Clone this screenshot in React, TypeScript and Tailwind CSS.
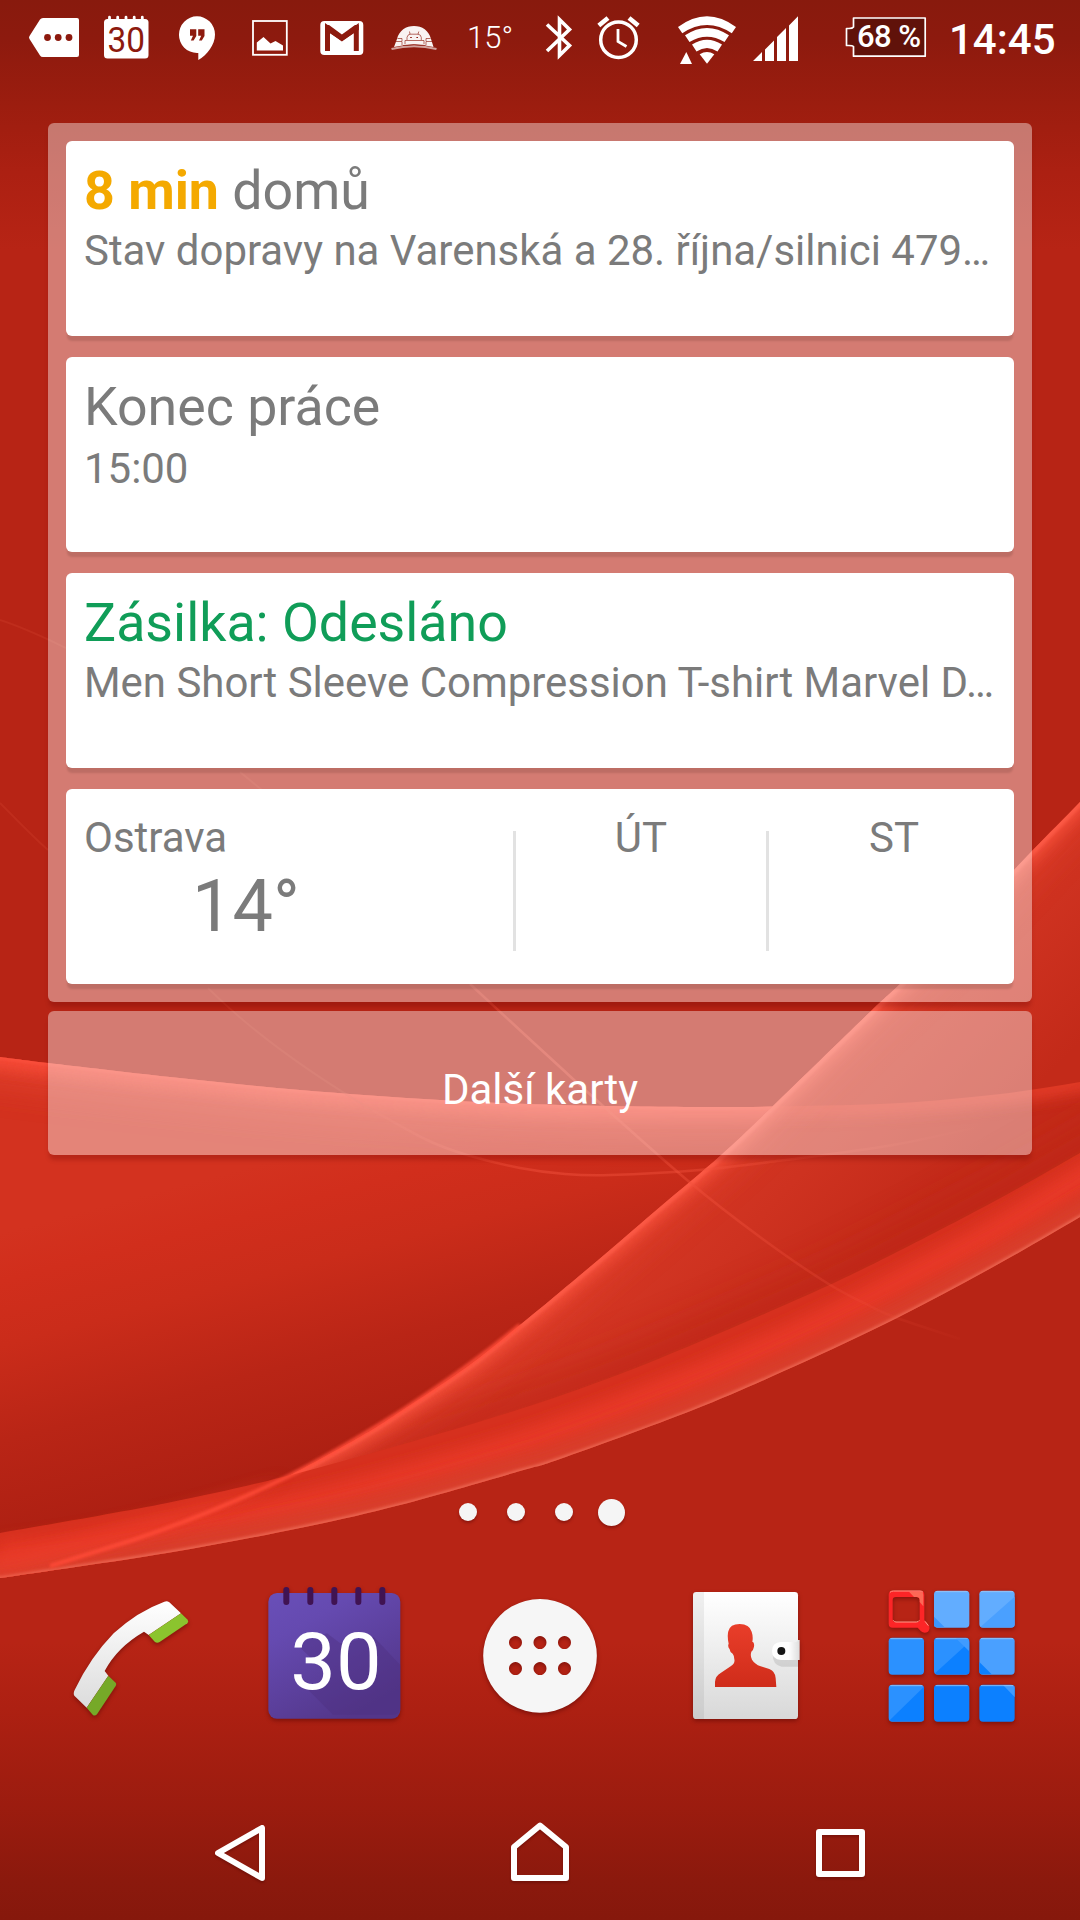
import { memo } from "react";
import type { ReactNode } from "react";

type Point = [number, number];

// Catmull-Rom spline through the points
const smooth = (points: Point[]) => {
  let d = `${points[0][0]} ${points[0][1]}`;
  for (let i = 0; i < points.length - 1; i++) {
    const a = points[i - 1] ?? points[i];
    const b = points[i];
    const c = points[i + 1];
    const e = points[i + 2] ?? c;
    d += `C${b[0] + (c[0] - a[0]) / 6} ${b[1] + (c[1] - a[1]) / 6} ${c[0] - (e[0] - b[0]) / 6} ${c[1] - (e[1] - b[1]) / 6} ${c[0]} ${c[1]}`;
  }
  return d;
};

const ridge = smooth([[-60, 1049], [0, 1057], [48, 1063], [170, 1077], [300, 1090], [440, 1100], [560, 1105], [700, 1107], [800, 1106], [900, 1103], [1000, 1094], [1080, 1082], [1140, 1071]]);
const diagonal = smooth([[1140, 738], [1080, 802], [1032, 851], [970, 916], [900, 984], [870, 1012], [773, 1106], [720, 1156], [660, 1207], [610, 1250], [560, 1292], [520, 1325], [467, 1367], [400, 1412], [360, 1437], [287, 1477], [233, 1502], [133, 1540], [50, 1566], [0, 1577], [-60, 1588]]);
const bandTop = smooth([[-60, 1543], [0, 1533], [167, 1503], [283, 1477], [400, 1445], [520, 1409], [620, 1374], [727, 1330], [827, 1286], [893, 1254], [993, 1202], [1080, 1153], [1140, 1118]]);
const bandMiddle = smooth([[-60, 1577], [0, 1569], [167, 1534], [300, 1505], [400, 1479], [520, 1444], [620, 1408], [727, 1365], [827, 1320], [893, 1286], [993, 1233], [1080, 1180], [1140, 1142]]);
const bandBottom = smooth([[1140, 1180], [1080, 1217], [993, 1267], [897, 1318], [793, 1367], [693, 1410], [560, 1459], [520, 1471], [400, 1505], [300, 1528], [167, 1553], [0, 1578], [-60, 1586]]);
const threadOne = smooth([[470, 984], [510, 1021], [560, 1067], [593, 1097], [687, 1180], [760, 1237], [827, 1283], [870, 1306], [897, 1318], [960, 1339]]);
const threadTwo = smooth([[372, 1110], [427, 1140], [467, 1155], [520, 1168], [565, 1174], [610, 1175], [700, 1170], [777, 1161], [893, 1145], [1000, 1122]]);

const Wallpaper = () => (
  <svg className="absolute inset-0" width="1080" height="1920" viewBox="0 0 1080 1920">
    <defs>
      <linearGradient id="shade" x1="0" y1="0" x2="0" y2="1">
        <stop offset="0" stopColor="#881a0d" />
        <stop offset="0.02" stopColor="#8d1a0e" />
        <stop offset="0.055" stopColor="#9c1d0f" />
        <stop offset="0.09" stopColor="#ac2012" />
        <stop offset="0.13" stopColor="#b72415" />
        <stop offset="0.855" stopColor="#b72415" />
        <stop offset="0.89" stopColor="#ad2012" />
        <stop offset="0.94" stopColor="#9c1c0f" />
        <stop offset="0.98" stopColor="#8b190d" />
        <stop offset="1" stopColor="#86180c" />
      </linearGradient>
      <linearGradient id="left" gradientUnits="userSpaceOnUse" x1="200" y1="1180" x2="280" y2="1480">
        <stop offset="0" stopColor="#d3321f" />
        <stop offset="0.15" stopColor="#d12e1c" />
        <stop offset="0.35" stopColor="#ca2c1a" />
        <stop offset="0.65" stopColor="#b92516" />
        <stop offset="1" stopColor="#ac1f12" />
      </linearGradient>
      <linearGradient id="sheet" gradientUnits="userSpaceOnUse" x1="700" y1="1170" x2="840" y2="1300">
        <stop offset="0" stopColor="#d43724" />
        <stop offset="0.4" stopColor="#ce3220" />
        <stop offset="1" stopColor="#c32a19" />
      </linearGradient>
      <linearGradient id="fade" gradientUnits="userSpaceOnUse" x1="360" y1="0" x2="980" y2="0">
        <stop offset="0" stopColor="#f0503b" stopOpacity="0.1" />
        <stop offset="0.3" stopColor="#f0503b" stopOpacity="0.5" />
        <stop offset="0.6" stopColor="#f0503b" stopOpacity="0.4" />
        <stop offset="1" stopColor="#f0503b" stopOpacity="0" />
      </linearGradient>
      <filter id="wide" filterUnits="userSpaceOnUse" x="-100" y="600" width="1300" height="1100">
        <feGaussianBlur stdDeviation="16" />
      </filter>
      <filter id="soft" filterUnits="userSpaceOnUse" x="-100" y="600" width="1300" height="1100">
        <feGaussianBlur stdDeviation="7" />
      </filter>
      <filter id="fine" filterUnits="userSpaceOnUse" x="-100" y="600" width="1300" height="1100">
        <feGaussianBlur stdDeviation="1.500" />
      </filter>
      <clipPath id="belowRidge">
        <path d={`M${ridge}V1700H-60Z`} />
      </clipPath>
      <clipPath id="belowDiagonal">
        <path d={`M${diagonal}V1700H1140Z`} />
      </clipPath>
      <clipPath id="aboveEdge">
        <path d={`M${bandBottom}V500H1140Z`} />
      </clipPath>
      <clipPath id="insideBand">
        <path d={`M${bandTop}V1700H-60Z`} />
      </clipPath>
    </defs>
    <rect width="1080" height="1920" fill="url(#shade)" />
    <g clipPath="url(#aboveEdge)" fill="none">
      <g clipPath="url(#belowRidge)">
        <rect y="1000" width="1080" height="600" fill="url(#left)" />
        <path d={`M${ridge}`} stroke="#e54431" strokeWidth="50" filter="url(#wide)" opacity="0.75" />
        <path d={`M${ridge}`} stroke="#f94c38" strokeWidth="22" filter="url(#soft)" opacity="0.85" />
        <path d={`M${ridge}`} stroke="#ff5743" strokeWidth="5" filter="url(#fine)" opacity="0.5" />
      </g>
      <g clipPath="url(#belowDiagonal)">
        <rect y="720" width="1080" height="880" fill="url(#sheet)" />
        <g clipPath="url(#belowRidge)">
          <path d={`M${ridge}`} stroke="#e63d29" strokeWidth="22" filter="url(#soft)" opacity="0.85" />
        </g>
        <path d={`M${bandTop}`} stroke="#bd2516" strokeWidth="50" filter="url(#wide)" opacity="0.6" />
        <path d={`M${diagonal}`} stroke="#e5432f" strokeWidth="32" filter="url(#wide)" opacity="0.7" />
        <path d={`M${diagonal}`} stroke="#fb5440" strokeWidth="16" filter="url(#soft)" opacity="0.8" />
        <path d={`M${diagonal}`} stroke="#ff5d49" strokeWidth="8" filter="url(#fine)" opacity="0.75" />
      </g>
      <g clipPath="url(#insideBand)">
        <rect y="1100" width="1080" height="500" fill="#d6301e" />
        <path d={`M${bandMiddle}`} stroke="#e73926" strokeWidth="26" filter="url(#soft)" />
        <path d={`M${bandBottom}`} stroke="#d93d2a" strokeWidth="34" filter="url(#soft)" />
        <path d={`M${bandBottom}`} stroke="#ec6a56" strokeWidth="4" filter="url(#fine)" opacity="0.9" />
      </g>
      <path d="M-10 1570L0 1540C110 1530 200 1502 287 1477C210 1515 110 1552 0 1577Z" fill="#f03d2a" filter="url(#soft)" opacity="0.5" />
      <path d="M520 1325C485 1354 440 1386 400 1412C360 1437 325 1458 287 1477C235 1502 190 1521 133 1540L50 1566" stroke="#ff4b38" strokeWidth="4" filter="url(#fine)" opacity="0.9" />
    </g>
    <g fill="none" stroke="url(#fade)" strokeWidth="2.500">
      <path d={`M${threadOne}`} />
      <path d={`M${threadTwo}`} />
    </g>
    <path d="M0 620C25 628 45 638 66 648M240 772L262 790M0 803C15 818 30 834 48 850M208 988C260 1040 330 1085 372 1110" fill="none" stroke="#d84632" strokeWidth="2" opacity="0.25" />
  </svg>
);

const StatusIcon = ({ x, w, children }: { x: number; w: number; children: ReactNode }) => (
  <svg width={w} height={75} viewBox={`${x} 0 ${w} 75`} className="shrink-0" fill="white">
    {children}
  </svg>
);

const StatusBar = () => (
  <header className="flex h-[75px] pl-5 text-white">
    <StatusIcon x={20} w={72}>
      <path d="M29.500 36Q28.500 37.500 29.500 39L40 55.500Q41 57 43 57H77Q79 57 79 55V20Q79 18 77 18H43Q41 18 40 19.500Z" />
      <g fill="#8d1a0e">
        <circle cx="47.500" cy="37.500" r="3.400" />
        <circle cx="58.200" cy="37.500" r="3.400" />
        <circle cx="69" cy="37.500" r="3.400" />
      </g>
    </StatusIcon>
    <StatusIcon x={92} w={68}>
      <rect x="104" y="19" width="44.500" height="39.500" rx="3.500" />
      <path d="M109.500 17.200V22M117.700 17.200V22M126 17.200V22M134.200 17.200V22M142.300 17.200V22" stroke="white" strokeWidth="2.800" strokeLinecap="round" />
      <text x="107.500" y="51.800" fontSize="34.500" textLength="37.500" lengthAdjust="spacingAndGlyphs" className="font-[Roboto,sans-serif]" fill="#8d1a0e">30</text>
    </StatusIcon>
    <StatusIcon x={160} w={72}>
      <path d="M197 16.300A18 18.300 0 0 1 215 34.500C215 45 207 55 198.300 60V53H197A18 18.300 0 0 1 197 16.300Z" />
      <path d="M190 29.300H196.300V36L193.600 40.500H190.800L193 35.800H190ZM198.200 29.300H204.500V36L201.800 40.500H199L201.200 35.800H198.200Z" fill="#8d1a0e" />
    </StatusIcon>
    <StatusIcon x={232} w={72}>
      <rect x="253" y="21" width="33.800" height="33.800" fill="none" stroke="white" strokeWidth="1.800" />
      <path d="M256.800 50.500V42.500L263.500 37L270.500 43.500L275.500 41L283 45.500V50.500Z" />
    </StatusIcon>
    <StatusIcon x={304} w={74}>
      <rect x="320.300" y="21" width="43" height="34" rx="4" />
      <path d="M327.500 51V28L341.900 38.500L356.300 28V51" stroke="#8d1a0e" strokeWidth="5" fill="none" />
      <path d="M325 25H329L341.900 34.500L355 25H358.800V30L341.900 41L325 30Z" fill="#8d1a0e" />
    </StatusIcon>
    <StatusIcon x={378} w={70}>
      <path d="M397 39C399 30.500 406 26 414 26S429 30.500 431 39L433.500 47Q414 42 394 47Z" opacity="0.95" />
      <path d="M391.500 49Q414 43.500 436.500 49" stroke="white" strokeWidth="2.200" fill="none" opacity="0.6" />
      <g fill="none" stroke="#8d1a0e" strokeWidth="0.800" opacity="0.8">
        <path d="M407 40V37.500Q407.500 34.500 410 34.200L409.500 31.500M410 34.200H418L418.800 31.500M418 34.200Q421 34.500 421.300 37.500V40M405 44V40.500H424V44M403 45.500Q414 43.500 425.500 45.500M397.500 38.500H402V41M430.500 38.500H426V41M396 41.500H402V45M426 45V41.500H432.500" />
      </g>
      <path d="M410.200 37.500H411.800M416.400 37.500H418" stroke="#8d1a0e" />
    </StatusIcon>
    <div className="w-[78px] shrink-0 pl-[19px] pt-[19px] text-[31px] font-light leading-[38px]">15°</div>
    <StatusIcon x={526} w={62}>
      <path d="M547 24.500L569.500 45.500L559.500 55.500V19.500L569.500 29.500L547 51" fill="none" stroke="white" strokeWidth="3.600" />
    </StatusIcon>
    <StatusIcon x={588} w={60}>
      <g fill="none" stroke="white">
        <circle cx="618.500" cy="39.700" r="17.800" strokeWidth="3.500" />
        <path d="M618 29V41.500L626.500 46.500" strokeWidth="2.800" />
        <path d="M598.800 25.500L608 18M638.200 25.500L629 18" strokeWidth="4.600" />
      </g>
    </StatusIcon>
    <StatusIcon x={648} w={96}>
      <path d="M678 27Q707 5.500 736 27L731.800 33.300Q707 16.800 682.300 33.300Z" />
      <path d="M685 35.300Q707 20.500 729 35.300L724.500 42Q707 31.500 689.500 42Z" />
      <path d="M692 44.500Q707 35 722 44.500L717.500 51.500Q707 44.500 696.500 51.500Z" />
      <path d="M699.700 54.300Q707 49.500 714.300 54.300L707 63.700Z" />
      <path d="M686.300 52L692 64H680Z" />
    </StatusIcon>
    <StatusIcon x={744} w={78}>
      <path d="M753 61L762 52V61ZM765 61V49.500L774 40.500V61ZM777 61V37L786 28V61ZM789 61V25.500L798 16.300V61Z" />
    </StatusIcon>
    <div className="relative h-[75px] w-[114px] shrink-0">
      <StatusIcon x={822} w={114}>
        <path d="M853.500 18H925.200V56.200H853.500V46.500Q852.500 45.500 849 45.500H846.500V28.500H849Q852.500 28.500 853.500 27Z" fill="#60120a" stroke="white" strokeWidth="1.700" strokeLinejoin="round" />
      </StatusIcon>
      <span className="absolute left-[35px] top-[18px] whitespace-nowrap text-[31px] font-medium leading-[37px] tracking-[-0.6px]">68 %</span>
    </div>
    <time className="pl-[13px] pt-[15px] text-[42px] font-medium leading-[50px]">14:45</time>
  </header>
);

const Card = ({ title, text }: { title: ReactNode; text: ReactNode }) => (
  <article className="h-[195px] rounded-md bg-white px-[18px] pt-[18px] shadow-[0_6px_2px_-1px_rgba(70,40,30,0.16)]">
    <h2 className="text-[53.7px] leading-[64px]">{title}</h2>
    <p className="whitespace-nowrap pt-px text-[41.95px] leading-[54px]">{text}</p>
  </article>
);

const WeatherCard = () => (
  <article className="flex h-[195px] rounded-md bg-white text-[42px] leading-[54px] shadow-[0_6px_2px_-1px_rgba(70,40,30,0.16)]">
    <div className="w-[447px] shrink-0 pl-[18px] pt-[22px]">
      <p>Ostrava</p>
      <p className="pl-[108px] pt-[2px] text-[72px] leading-[80px]">14°</p>
    </div>
    <div className="mt-[42px] h-[120px] w-[3px] shrink-0 bg-[#e2e2e2]" />
    <p className="w-[250px] shrink-0 pt-[22px] text-center">ÚT</p>
    <div className="mt-[42px] h-[120px] w-[3px] shrink-0 bg-[#e2e2e2]" />
    <p className="flex-1 pl-[5px] pt-[22px] text-center">ST</p>
  </article>
);

const PageDots = () => (
  <div className="mt-[343px] flex h-[28px] items-center justify-center gap-[30px] pl-[3px]">
    <i className="size-[18px] rounded-full bg-[#f5f5f5] shadow-[0_2px_3px_rgba(80,0,0,0.4)]" />
    <i className="size-[18px] rounded-full bg-[#f5f5f5] shadow-[0_2px_3px_rgba(80,0,0,0.4)]" />
    <i className="size-[18px] rounded-full bg-[#f5f5f5] shadow-[0_2px_3px_rgba(80,0,0,0.4)]" />
    <i className="-ml-[5px] size-[27px] rounded-full bg-[#f5f5f5] shadow-[0_2px_3px_rgba(80,0,0,0.4)]" />
  </div>
);

const DockIcon = ({ viewBox, children }: { viewBox: string; children: ReactNode }) => (
  <svg className="mx-auto drop-shadow-[0_2px_2px_rgba(70,0,0,0.45)]" width="180" height="180" viewBox={viewBox}>
    {children}
  </svg>
);

const tiles = [
  { x: 223, y: 62, fill: "#62adff", corner: "M223 140L255 172H230Q223 172 223 165Z", tint: "#3b96ff" },
  { x: 359, y: 62, fill: "#62adff", corner: "M465 80V165Q465 172 458 172H366L363 170Z", tint: "#4aa0ff" },
  { x: 87, y: 203, fill: "#2b91ff", corner: "", tint: "" },
  { x: 223, y: 203, fill: "#2b91ff", corner: "M329 216V305Q329 313 321 313H231L226 310Z", tint: "#0c80ff" },
  { x: 359, y: 203, fill: "#4aa0ff", corner: "M359 276L396 313H367Q359 313 359 305Z", tint: "#0c80ff" },
  { x: 87, y: 344, fill: "#2b91ff", corner: "M193 350V446Q193 454 185 454H95L90 451Z", tint: "#0c80ff" },
  { x: 223, y: 344, fill: "#0c80ff", corner: "", tint: "" },
  { x: 359, y: 344, fill: "#0c80ff", corner: "M430 345H457Q465 345 465 353V381Z", tint: "#409bff" },
];

const Dock = () => (
  <nav className="mt-[44px] grid h-[180px] grid-cols-5 px-[27px]">
    <DockIcon viewBox="-1 0 540 540">
      <defs>
        <linearGradient id="handset" x1="0" y1="0" x2="0" y2="1">
          <stop offset="0" stopColor="#ffffff" />
          <stop offset="1" stopColor="#dcdcdc" />
        </linearGradient>
      </defs>
      <path d="M102 377Q98 370 103 360Q150 262 220 190Q290 125 372 95Q380 91 387 97L422 130L325 195L311 185Q230 232 193 303L204 317L139 413Z" fill="url(#handset)" />
      <path d="M422 130L442 149Q446 155 441 160L358 216Q350 221 343 215L325 195Z" fill="#8bc42e" />
      <path d="M204 317L226 338Q229 343 226 348L170 433Q163 440 157 434L139 413Z" fill="#76a928" />
    </DockIcon>
    <DockIcon viewBox="614 0 540 540">
      <defs>
        <linearGradient id="calendar" x1="0" y1="0" x2="0.6" y2="1">
          <stop offset="0" stopColor="#694fb8" />
          <stop offset="0.3" stopColor="#654ab0" />
          <stop offset="1" stopColor="#53368a" />
        </linearGradient>
      </defs>
      <rect x="684" y="69" width="396" height="377" rx="26" fill="url(#calendar)" />
      <path d="M766 220L870 320L800 356L878 434H1056Q1080 434 1080 410V285L1000 200L900 220L860 190Z" fill="#4d2f80" opacity="0.4" />
      <g fill="#401352">
        <rect x="729" y="51" width="18" height="54" rx="9" />
        <rect x="801" y="51" width="18" height="54" rx="9" />
        <rect x="873" y="51" width="18" height="54" rx="9" />
        <rect x="945" y="51" width="18" height="54" rx="9" />
        <rect x="1017" y="51" width="18" height="54" rx="9" />
      </g>
      <text x="750" y="356" fontSize="240" textLength="274" lengthAdjust="spacingAndGlyphs" className="font-[Roboto,sans-serif]" fill="white">30</text>
    </DockIcon>
    <DockIcon viewBox="-30 0 540 540">
      <path fillRule="evenodd" d="M240 87a170.500 170.500 0 1 0 .1 0ZM166.500 198a19.500 19.500 0 1 1-.1 0ZM240 198a19.500 19.500 0 1 1-.1 0ZM313.500 198a19.500 19.500 0 1 1-.1 0ZM166.500 276a19.500 19.500 0 1 1-.1 0ZM240 276a19.500 19.500 0 1 1-.1 0ZM313.500 276a19.500 19.500 0 1 1-.1 0Z" fill="#f6f6f6" />
    </DockIcon>
    <DockIcon viewBox="585 0 540 540">
      <defs>
        <linearGradient id="cover" x1="0" y1="0" x2="0" y2="1">
          <stop offset="0" stopColor="#ffffff" />
          <stop offset="0.25" stopColor="#f6f6f6" />
          <stop offset="1" stopColor="#d8d8d8" />
        </linearGradient>
        <linearGradient id="person" x1="0" y1="0" x2="0" y2="1">
          <stop offset="0" stopColor="#e93e2a" />
          <stop offset="1" stopColor="#cf2c1a" />
        </linearGradient>
        <linearGradient id="clasp" x1="0" y1="0" x2="1" y2="0">
          <stop offset="0.6" stopColor="#ffffff" />
          <stop offset="1" stopColor="#dddddd" />
        </linearGradient>
      </defs>
      <rect x="699" y="66" width="315" height="381" rx="10" fill="url(#cover)" />
      <path d="M709 66H732V447H709Q699 447 699 437V76Q699 66 709 66Z" fill="#000" opacity="0.06" />
      <path d="M765 351V336Q766 318 782 309L812 289Q826 280 823 268Q823 257 818 251Q810 248 809 238Q802 230 806 221Q801 198 805 184Q810 162 839 162Q868 162 875 185Q880 200 877 215Q884 217 882 230Q880 241 874 245Q870 258 876 269Q884 282 902 289L928 297Q946 304 947 325L949 351Z" fill="url(#person)" />
      <path d="M1014 220V290H965Q938 285 938 255Z" fill="#000" opacity="0.1" />
      <path d="M1019 210V270H963Q936 268 936 243Q936 217 963 216H1006Q1013 216 1014 210Z" fill="url(#clasp)" />
      <circle cx="964" cy="243" r="12" fill="#161616" />
    </DockIcon>
    <DockIcon viewBox="1 0 540 540">
      <path fillRule="evenodd" d="M99 62H182Q194 62 194 74V150L207 165Q213 176 205 185Q194 192 184 184L174 173H99Q87 173 87 161V74Q87 62 99 62ZM109 81Q99 81 99 91V146Q99 156 109 156H170Q180 156 180 146V91Q180 81 170 81Z" fill="#fc2527" />
      <path d="M148 65H182Q191 65 191 76V109L180 96V91Q180 81 170 81H163Z" fill="#fc6856" />
      <path d="M91 67Q95 63 101 63H181Q187 63 190 67M101 151Q104 156 109 156H170Q176 156 179 151M196 154L206 167" fill="none" stroke="#ff9b8a" strokeWidth="3" />
      {tiles.map((tile) => (
        <g key={`${tile.x}-${tile.y}`}>
          <rect x={tile.x} y={tile.y} width="106" height="111" rx="11" fill={tile.fill} />
          <path d={tile.corner} fill={tile.tint} />
          <path d={`M${tile.x + 5} ${tile.y + 3}h96`} stroke="#a9caf0" strokeWidth="3" opacity="0.75" />
        </g>
      ))}
      <path d="M290 206H320Q328 206 328 214V243Z" fill="#409bff" />
    </DockIcon>
  </nav>
);

const NavigationBar = () => (
  <footer className="mt-[50px] flex flex-1 justify-between px-[204px] text-white">
    <svg className="drop-shadow-[0_2px_1px_rgba(60,0,0,0.3)]" width="72" height="100" viewBox="204 1800 72 100" fill="none" stroke="currentColor" strokeWidth="6" strokeLinejoin="round">
      <path d="M218 1853L262 1828V1878Z" />
    </svg>
    <svg className="drop-shadow-[0_2px_1px_rgba(60,0,0,0.3)]" width="72" height="100" viewBox="504 1800 72 100" fill="none" stroke="currentColor" strokeWidth="6" strokeLinejoin="round">
      <path d="M514 1847L540 1825.500L566 1847V1878H514Z" />
    </svg>
    <svg className="drop-shadow-[0_2px_1px_rgba(60,0,0,0.3)]" width="72" height="100" viewBox="804 1800 72 100" fill="none" stroke="currentColor" strokeWidth="6" strokeLinejoin="round">
      <path d="M819 1832H862V1874H819Z" />
    </svg>
  </footer>
);

const App = () => {
  return (
    <div className="relative h-[1920px] w-[1080px] overflow-hidden bg-[#b72415] font-[Roboto,sans-serif]">
      <Wallpaper />
      <div className="relative flex h-full flex-col">
        <StatusBar />
        <main className="mx-12 mt-12 flex flex-col gap-[9px]">
          <section className="flex flex-col gap-[21px] rounded-md bg-white/40 p-[18px] text-[#7b7b7b] shadow-[0_6px_4px_-1px_rgba(100,0,0,0.25)]">
            <Card
              title={
                <>
                  <b className="font-bold text-[#f4a900]">8 min</b> domů
                </>
              }
              text="Stav dopravy na Varenská a 28. října/silnici 479…"
            />
            <Card title="Konec práce" text={<span className="block pt-0.5">15:00</span>} />
            <Card
              title={<span className="text-[#109d58]">Zásilka: Odesláno</span>}
              text="Men Short Sleeve Compression T-shirt Marvel D…"
            />
            <WeatherCard />
          </section>
          <button className="h-[144px] rounded-md bg-white/40 pt-[13px] text-[42px] text-white shadow-[0_6px_4px_-1px_rgba(100,0,0,0.25)]">
            Další karty
          </button>
        </main>
        <PageDots />
        <Dock />
        <NavigationBar />
      </div>
    </div>
  );
};

export default memo(App);
